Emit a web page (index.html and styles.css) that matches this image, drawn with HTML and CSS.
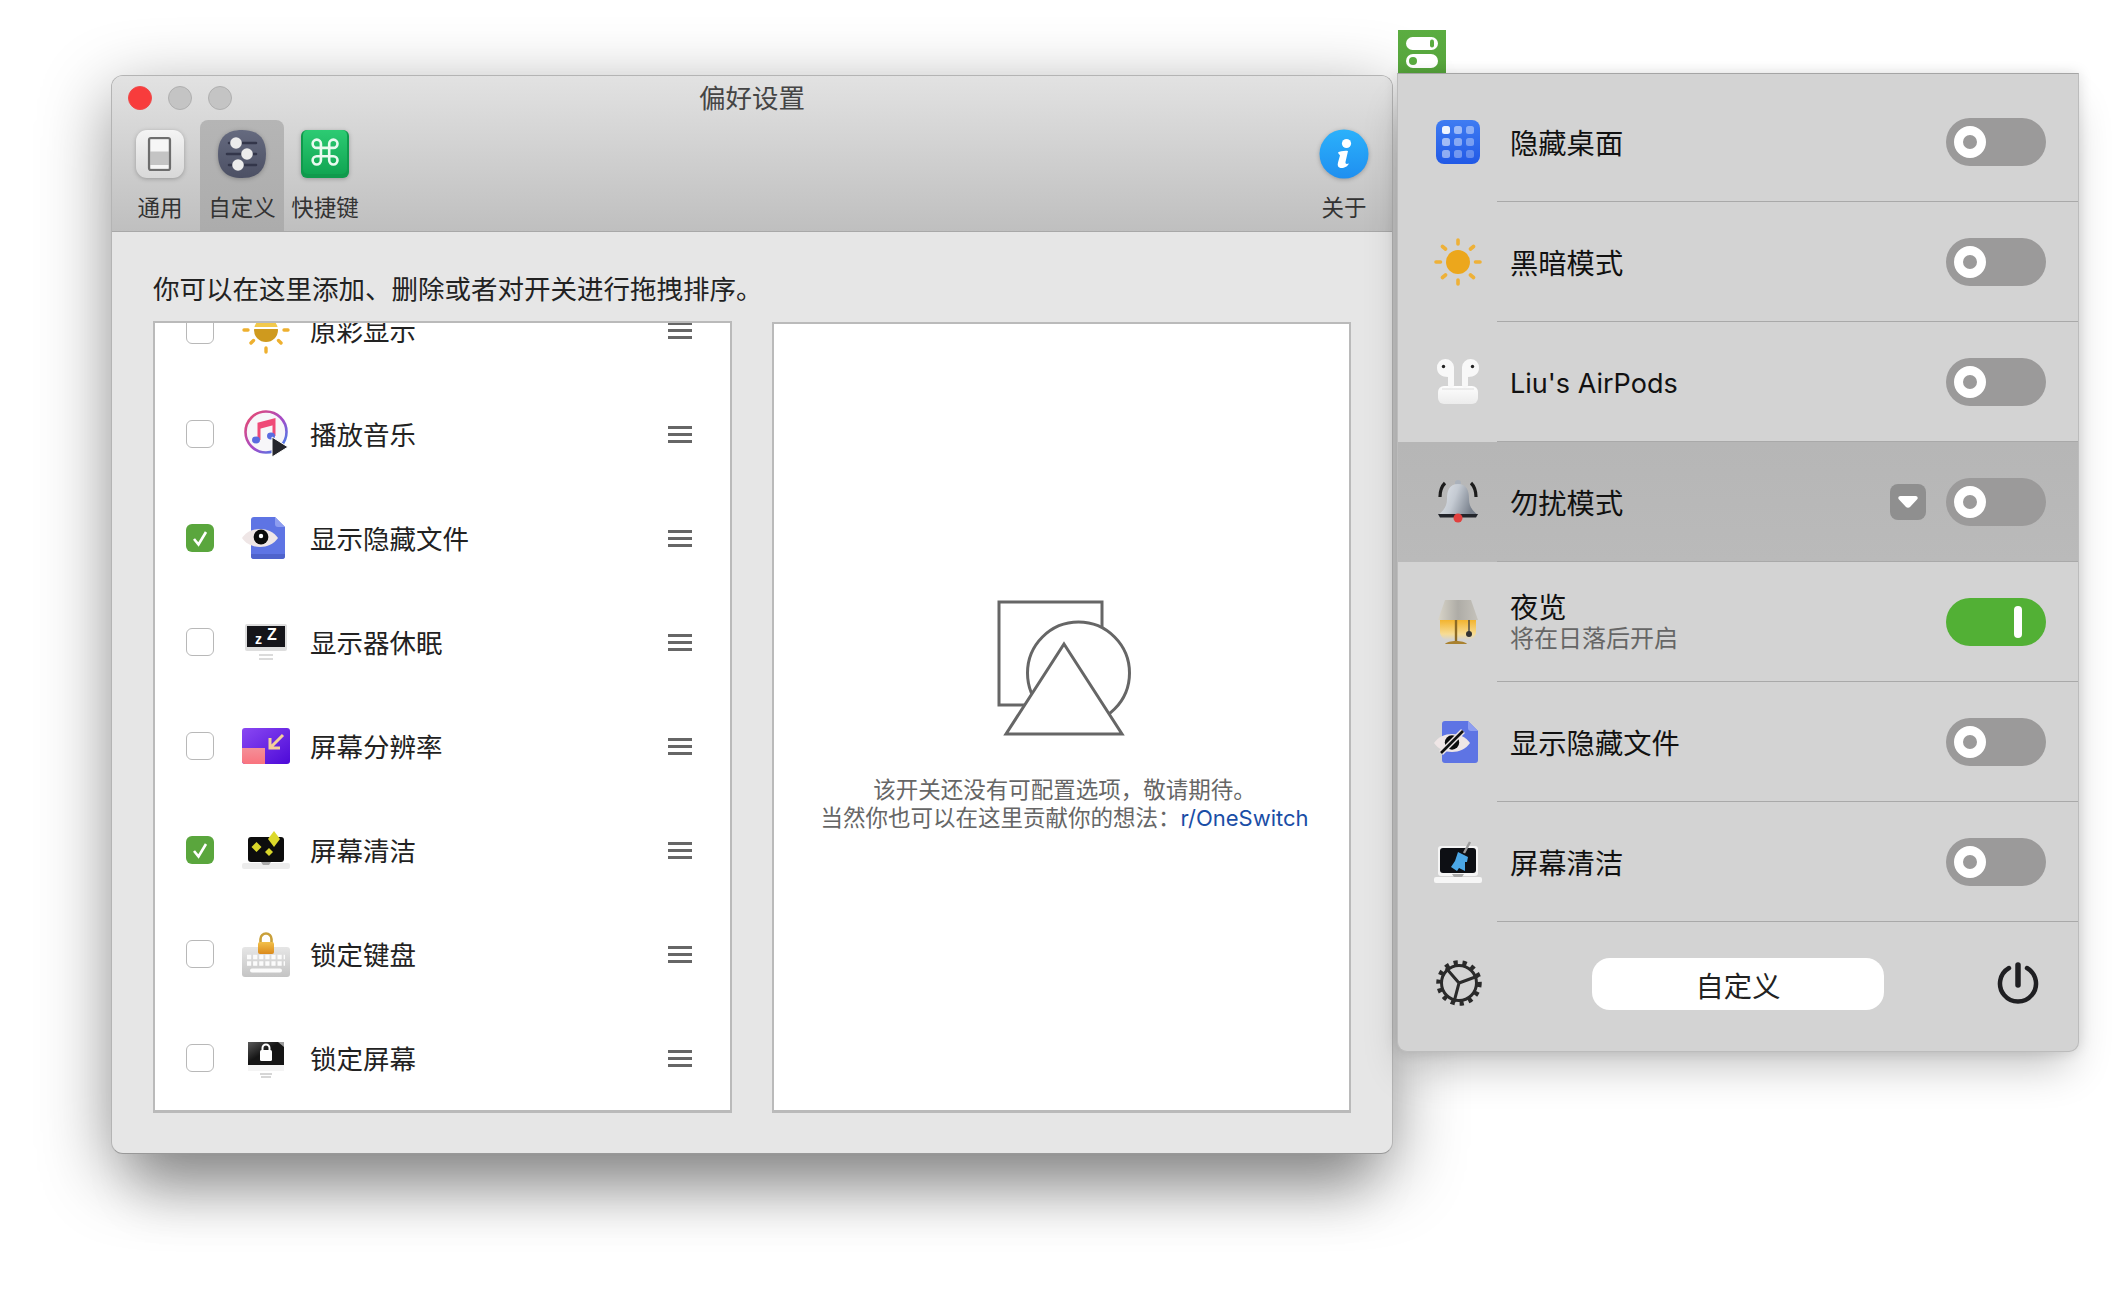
FILE: index.html
```html
<!DOCTYPE html>
<html lang="zh-CN">
<head>
<meta charset="utf-8">
<title>偏好设置</title>
<link rel="stylesheet" href="styles.css">
</head>
<body>
<section class="window">
  <header class="toolbar">
    <div class="titlebar">
      <div class="lights"><span class="light light-red"></span><span class="light"></span><span class="light"></span></div>
      <div class="title">偏好设置</div>
    </div>
    <nav class="tabs">
      <div class="tab tab-general">
        <svg class="tab-icon" viewBox="0 0 50 50"><defs><linearGradient id="g1" x1="0" y1="0" x2="0" y2="1"><stop offset="0" stop-color="#f4f4f4"/><stop offset="1" stop-color="#d8d8d8"/></linearGradient></defs><rect x="1" y="1" width="48" height="48" rx="11" fill="url(#g1)"/><rect x="14" y="9" width="21" height="32" rx="2" fill="#c4c4c4" stroke="#6d6d6d" stroke-width="2.2"/><rect x="15.500" y="10.500" width="18" height="12" fill="#f6f6f6"/><rect x="15.500" y="36" width="18" height="3.600" fill="#f6f6f6"/></svg>
        <span class="tab-label">通用</span>
      </div>
      <div class="tab tab-custom tab-active">
        <svg class="tab-icon" viewBox="0 0 50 50"><defs><linearGradient id="g2" x1="0" y1="0" x2="0" y2="1"><stop offset="0" stop-color="#656a7f"/><stop offset="1" stop-color="#4c5064"/></linearGradient></defs><path d="M25 1C41 1 49 9 49 25S41 49 25 49 1 41 1 25 9 1 25 1Z" fill="url(#g2)"/><g stroke="#33364a" stroke-width="2.6" stroke-linecap="round"><path d="M12 14H39M10 25H39M12 36H39"/></g><circle cx="19" cy="14" r="5.800" fill="#ececec"/><circle cx="30" cy="25" r="5.800" fill="#ececec"/><circle cx="21" cy="36" r="5.800" fill="#ececec"/></svg>
        <span class="tab-label">自定义</span>
      </div>
      <div class="tab tab-keys">
        <svg class="tab-icon" viewBox="0 0 50 50"><defs><linearGradient id="g3" x1="0" y1="0" x2="0" y2="1"><stop offset="0" stop-color="#2dcb73"/><stop offset="1" stop-color="#10a552"/></linearGradient></defs><rect x="1" y="1" width="48" height="48" rx="6" fill="#0f9a4c"/><rect x="3" y="1" width="44" height="44" rx="5" fill="url(#g3)"/><g transform="translate(8.500 6.500) scale(1.380)"><path d="M15 6v12a3 3 0 1 0 3-3H6a3 3 0 1 0 3 3V6a3 3 0 1 0-3 3h12a3 3 0 1 0-3-3" fill="none" stroke="#eafaf0" stroke-width="1.900"/></g></svg>
        <span class="tab-label">快捷键</span>
      </div>
      <div class="tab tab-about">
        <svg class="tab-icon" viewBox="0 0 50 50"><defs><linearGradient id="g4" x1="0" y1="0" x2="0" y2="1"><stop offset="0" stop-color="#2bb1fb"/><stop offset="1" stop-color="#1f8ff0"/></linearGradient></defs><circle cx="25" cy="25" r="24.500" fill="url(#g4)"/><circle cx="27.500" cy="14.500" r="4.600" fill="#fff"/><path d="M19 23.500C21 22.500 25 21.500 29 22L26.500 33C26.300 35 27.500 35.500 29.800 34.500 29 37.500 24.500 39.500 21.500 39 19 38.500 18.200 36.500 19 33.500L21 26.500C20.500 25.500 19.500 25 19 23.500Z" fill="#fff"/></svg>
        <span class="tab-label">关于</span>
      </div>
    </nav>
  </header>
  <main class="content">
    <p class="intro">你可以在这里添加、删除或者对开关进行拖拽排序。</p>
    <div class="panels">
      <ul class="list">
        <li class="row">
          <span class="check"></span>
          <svg class="row-icon" viewBox="0 0 48 48"><defs><clipPath id="c1"><circle cx="24" cy="24" r="12"/></clipPath></defs><g clip-path="url(#c1)"><rect x="10" y="10" width="28" height="5" fill="#b99bd8"/><rect x="10" y="15" width="28" height="2" fill="#fff"/><rect x="10" y="17" width="28" height="4" fill="#f2c94c"/><rect x="10" y="21" width="28" height="2" fill="#fff"/><rect x="10" y="23" width="28" height="14" fill="#cf9a1e"/></g><g stroke="#eeb02f" stroke-width="3.400" stroke-linecap="round"><path d="M2 24H6M42 24H46M24 42V46M9 37L11.500 34.500M39 37L36.500 34.500"/></g></svg>
          <span class="row-label">原彩显示</span>
          <span class="grip"><i></i><i></i><i></i></span>
        </li>
        <li class="row">
          <span class="check"></span>
          <svg class="row-icon" viewBox="0 0 48 48"><defs><linearGradient id="m1" x1="0" y1="0" x2="1" y2="1"><stop offset="0" stop-color="#ef4a68"/><stop offset=".55" stop-color="#a34bc9"/><stop offset="1" stop-color="#2f8df0"/></linearGradient></defs><circle cx="24" cy="22" r="20.500" fill="#f7f6f9" stroke="url(#m1)" stroke-width="2.600"/><path d="M17 30V14L32 10V26" fill="none" stroke="#ef4a78" stroke-width="3"/><path d="M17 14L32 10V15L17 19Z" fill="#ef4a78"/><ellipse cx="14" cy="30" rx="4" ry="3.400" fill="#5a6be0"/><ellipse cx="29" cy="26" rx="4" ry="3.400" fill="#5a6be0"/><path d="M30 27L46 37 30 47Z" fill="#26262c" stroke="#fff" stroke-width="1"/></svg>
          <span class="row-label">播放音乐</span>
          <span class="grip"><i></i><i></i><i></i></span>
        </li>
        <li class="row">
          <span class="check check-on"><svg viewBox="0 0 28 28"><path d="M8 15L12.500 20.500 20 8" fill="none" stroke="#fff" stroke-width="2.600"/></svg></span>
          <svg class="row-icon" viewBox="0 0 48 48"><path d="M12 3H33L43 13V42A3 3 0 0 1 40 45H12A3 3 0 0 1 9 42V6A3 3 0 0 1 12 3Z" fill="#5e74e4"/><path d="M33 3L43 13H36A3 3 0 0 1 33 10Z" fill="#8d9df0"/><path d="M9 40H43V42A3 3 0 0 1 40 45H12A3 3 0 0 1 9 42Z" fill="#4f63cc"/><path d="M0 24C8 12 28 12 36 24 28 36 8 36 0 24Z" fill="#efe6e6"/><circle cx="19" cy="23" r="7.400" fill="#0b0b0b"/><circle cx="19" cy="22" r="2.200" fill="#fff"/></svg>
          <span class="row-label">显示隐藏文件</span>
          <span class="grip"><i></i><i></i><i></i></span>
        </li>
        <li class="row">
          <span class="check"></span>
          <svg class="row-icon" viewBox="0 0 48 48"><rect x="3" y="6" width="42" height="27" rx="2" fill="#dedede"/><rect x="5" y="8" width="38" height="21" fill="#15151a"/><text class="zz-small" x="13" y="26">z</text><text class="zz-big" x="25" y="22">Z</text><path d="M17 37H31M17 41H31" stroke="#cfcfcf" stroke-width="1.600"/></svg>
          <span class="row-label">显示器休眠</span>
          <span class="grip"><i></i><i></i><i></i></span>
        </li>
        <li class="row">
          <span class="check"></span>
          <svg class="row-icon" viewBox="0 0 48 48"><defs><linearGradient id="r1" x1="0" y1="0" x2="1" y2="1"><stop offset="0" stop-color="#8a48f2"/><stop offset="1" stop-color="#4d0ad8"/></linearGradient><linearGradient id="r2" x1="0" y1="0" x2="0" y2="1"><stop offset="0" stop-color="#f48f98"/><stop offset="1" stop-color="#f9737e"/></linearGradient></defs><rect y="6" width="48" height="36" rx="3" fill="url(#r1)"/><path d="M0 26H23V42H3A3 3 0 0 1 0 39Z" fill="url(#r2)"/><path d="M41 13L28 26M28 16V26H38" fill="none" stroke="#f4cf9a" stroke-width="3"/></svg>
          <span class="row-label">屏幕分辨率</span>
          <span class="grip"><i></i><i></i><i></i></span>
        </li>
        <li class="row">
          <span class="check check-on"><svg viewBox="0 0 28 28"><path d="M8 15L12.500 20.500 20 8" fill="none" stroke="#fff" stroke-width="2.600"/></svg></span>
          <svg class="row-icon" viewBox="0 0 48 48"><rect y="37" width="48" height="6" rx="2" fill="#ececec"/><rect x="6" y="11" width="36" height="25" rx="3" fill="#0d0d0d"/><path d="M19 36H29L27 39H21Z" fill="#a9a9a9"/><path d="M32 5L38 13 32 21 26 13Z" fill="#dcd92a"/><path d="M14.500 16L19.500 21 14.500 26 9.500 21Z" fill="#d9d62a"/><path d="M27 22L31 26 27 30 23 26Z" fill="#d9d62a"/></svg>
          <span class="row-label">屏幕清洁</span>
          <span class="grip"><i></i><i></i><i></i></span>
        </li>
        <li class="row">
          <span class="check"></span>
          <svg class="row-icon" viewBox="0 0 48 48"><defs><linearGradient id="k1" x1="0" y1="0" x2="0" y2="1"><stop offset="0" stop-color="#e6e6e6"/><stop offset="1" stop-color="#c4c4c4"/></linearGradient><linearGradient id="k2" x1="0" y1="0" x2="0" y2="1"><stop offset="0" stop-color="#f2c04a"/><stop offset="1" stop-color="#db8a1c"/></linearGradient></defs><rect y="17" width="48" height="30" rx="3" fill="url(#k1)"/><g stroke="#fbfbfb" stroke-width="4.500" stroke-dasharray="4.200 1.900"><path d="M5 27H43M5 33.500H43"/></g><path d="M10 40.500H38" stroke="#fbfbfb" stroke-width="4" stroke-linecap="round"/><path d="M18.500 13V9A5.500 5.500 0 0 1 29.500 9V13" fill="none" stroke="#c9a03a" stroke-width="2.600"/><rect x="16" y="12" width="16" height="12" rx="2" fill="url(#k2)"/></svg>
          <span class="row-label">锁定键盘</span>
          <span class="grip"><i></i><i></i><i></i></span>
        </li>
        <li class="row">
          <span class="check"></span>
          <svg class="row-icon" viewBox="0 0 48 48"><defs><linearGradient id="l1" x1="0" y1="0" x2="1" y2="1"><stop offset="0" stop-color="#5a5a5a"/><stop offset=".45" stop-color="#151515"/></linearGradient></defs><rect x="6" y="8" width="36" height="23" fill="url(#l1)"/><path d="M36 8H42V13Z" fill="#9a9a9a"/><rect x="6" y="31" width="36" height="6" fill="#f4f4f4"/><path d="M18 40H30M19 43H29" stroke="#c9c9c9" stroke-width="1.400"/><rect x="18" y="16" width="12" height="11" rx="1.500" fill="#fff"/><path d="M20.500 16V14A3.500 3.500 0 0 1 27.500 14V16" fill="none" stroke="#fff" stroke-width="2"/></svg>
          <span class="row-label">锁定屏幕</span>
          <span class="grip"><i></i><i></i><i></i></span>
        </li>
      </ul>
      <div class="detail">
        <svg class="shapes" viewBox="0 0 136 138"><rect x="3" y="3" width="103" height="103" fill="none" stroke="#666" stroke-width="3"/><circle cx="82.500" cy="74" r="51" fill="#fff" stroke="#666" stroke-width="3"/><path d="M68 45L126 135H10Z" fill="#fff" stroke="#666" stroke-width="3"/></svg>
        <p class="detail-text">该开关还没有可配置选项&#xFF0C;敬请期待。<br>当然你也可以在这里贡献你的想法&#xFF1A;<a class="detail-link">r/OneSwitch</a></p>
      </div>
    </div>
  </main>
</section>

<div class="menubar-item">
  <svg viewBox="0 0 48 43"><rect x="8" y="7" width="32" height="13" rx="6.500" fill="#fff"/><rect x="8" y="24" width="32" height="14" rx="7" fill="#fff"/><rect x="32" y="9.500" width="4" height="8" rx="2" fill="#59ab3f"/><circle cx="15" cy="31" r="4" fill="#59ab3f"/></svg>
</div>

<aside class="popover">
  <div class="pop-row">
    <svg class="pop-icon" viewBox="0 0 48 48"><defs><linearGradient id="p1" x1="0" y1="0" x2="0" y2="1"><stop offset="0" stop-color="#3f7cf2"/><stop offset="1" stop-color="#2159e6"/></linearGradient></defs><rect x="2" y="2" width="44" height="44" rx="8" fill="url(#p1)"/><g fill="#fff"><rect x="8" y="8" width="8" height="8" rx="2.500" opacity=".92"/><rect x="20" y="8" width="8" height="8" rx="2.500" opacity=".5"/><rect x="32" y="8" width="8" height="8" rx="2.500" opacity=".42"/><rect x="8" y="20" width="8" height="8" rx="2.500" opacity=".55"/><rect x="20" y="20" width="8" height="8" rx="2.500" opacity=".42"/><rect x="32" y="20" width="8" height="8" rx="2.500" opacity=".35"/><rect x="8" y="32" width="8" height="8" rx="2.500" opacity=".48"/><rect x="20" y="32" width="8" height="8" rx="2.500" opacity=".35"/><rect x="32" y="32" width="8" height="8" rx="2.500" opacity=".28"/></g></svg>
    <div class="pop-text"><span class="pop-title">隐藏桌面</span></div>
    <span class="toggle"><span class="knob"></span></span>
  </div>
  <div class="pop-row">
    <svg class="pop-icon" viewBox="0 0 48 48"><circle cx="24" cy="24" r="12" fill="#eca71c"/><g stroke="#eeb138" stroke-width="3.600" stroke-linecap="round"><path d="M24 2V6M24 42V46M2 24H6.500M41.500 24H46M8.500 8.500L11.500 11M39.500 8.500L36.500 11M8.500 39.500L11.500 37M39.500 39.500L36.500 37"/></g></svg>
    <div class="pop-text"><span class="pop-title">黑暗模式</span></div>
    <span class="toggle"><span class="knob"></span></span>
  </div>
  <div class="pop-row">
    <svg class="pop-icon" viewBox="0 0 48 48"><defs><linearGradient id="p2" x1="0" y1="0" x2="0" y2="1"><stop offset="0" stop-color="#fdfdfd"/><stop offset="1" stop-color="#ececec"/></linearGradient></defs><rect x="4" y="28" width="40" height="18" rx="6" fill="url(#p2)"/><path d="M8 31H40" stroke="#dcdcdc" stroke-width="1"/><path d="M3 10A8.500 8.500 0 0 1 20 9V27C20 31 14 31 14 27V19C8 19 3 16 3 10Z" fill="#f8f8f8"/><path d="M45 10A8.500 8.500 0 0 0 28 9V27C28 31 34 31 34 27V19C40 19 45 16 45 10Z" fill="#f8f8f8"/><circle cx="9.500" cy="8.500" r="1.700" fill="#222"/><circle cx="38.500" cy="8.500" r="1.700" fill="#222"/></svg>
    <div class="pop-text"><span class="pop-title pop-title-latin">Liu's AirPods</span></div>
    <span class="toggle"><span class="knob"></span></span>
  </div>
  <div class="pop-row pop-row-active">
    <svg class="pop-icon" viewBox="0 0 48 48"><defs><linearGradient id="p3" x1="0" y1="0" x2="1" y2=".3"><stop offset="0" stop-color="#e4e8ed"/><stop offset=".5" stop-color="#c4cad2"/><stop offset="1" stop-color="#767e8a"/></linearGradient></defs><path d="M6 19C6 12 8 8 11 5M42 19C42 12 40 8 37 5" fill="none" stroke="#1c1c1c" stroke-width="3.200"/><circle cx="24" cy="5" r="3" fill="#aab1bb"/><path d="M24 6C33 6 35 13 35 21 35 29 39 33 44 37H4C9 33 13 29 13 21 13 13 15 6 24 6Z" fill="url(#p3)"/><path d="M4 36H44L42 39.500H6Z" fill="#23252b"/><circle cx="24" cy="40" r="4.500" fill="#e2403e"/></svg>
    <div class="pop-text"><span class="pop-title">勿扰模式</span></div>
    <span class="dropdown"><svg viewBox="0 0 20 12"><path d="M2.500 0H17.500C19.500 0 20.500 2 19 3.500L12 11C11 12 9 12 8 11L1 3.500C-.5 2 .5 0 2.500 0Z" fill="#fff"/></svg></span>
    <span class="toggle"><span class="knob"></span></span>
  </div>
  <div class="pop-row">
    <svg class="pop-icon" viewBox="0 0 48 48"><defs><linearGradient id="p4" x1="0" y1="0" x2="1" y2="0"><stop offset="0" stop-color="#d8d4c8"/><stop offset=".5" stop-color="#aeaca6"/><stop offset="1" stop-color="#c5c2bb"/></linearGradient><linearGradient id="p5" x1="0" y1="0" x2="0" y2="1"><stop offset="0" stop-color="#f3b42f"/><stop offset=".7" stop-color="#f7dc94"/><stop offset="1" stop-color="#f7dc94" stop-opacity="0"/></linearGradient></defs><path d="M6 22H42V34C42 38 38 42 36 42H12C10 42 6 38 6 34Z" fill="url(#p5)"/><path d="M11 2H37L44 22H4Z" fill="url(#p4)"/><path d="M22 22V43" stroke="#8d6a24" stroke-width="2.400"/><path d="M35 22V34" stroke="#444" stroke-width="1.400"/><circle cx="35" cy="36" r="3" fill="#333"/><path d="M11 46C14 42 30 42 33 46Z" fill="#a9812f"/></svg>
    <div class="pop-text pop-text-stack"><span class="pop-title">夜览</span><span class="pop-sub">将在日落后开启</span></div>
    <span class="toggle toggle-on"><span class="bar"></span></span>
  </div>
  <div class="pop-row">
    <svg class="pop-icon" viewBox="0 0 48 48"><path d="M11 3H34L44 13V42A3 3 0 0 1 41 45H11A3 3 0 0 1 8 42V6A3 3 0 0 1 11 3Z" fill="#5e74e4"/><path d="M34 3L44 13H37A3 3 0 0 1 34 10Z" fill="#8d9df0"/><path d="M0 25C8 13 28 13 36 25 28 37 8 37 0 25Z" fill="#efe6e6"/><circle cx="18" cy="24.500" r="7.200" fill="#0b0b0b"/><path d="M7 35L29 13" stroke="#efe6e6" stroke-width="5.500"/><path d="M7 35L29 13" stroke="#111" stroke-width="2.600"/></svg>
    <div class="pop-text"><span class="pop-title">显示隐藏文件</span></div>
    <span class="toggle"><span class="knob"></span></span>
  </div>
  <div class="pop-row">
    <svg class="pop-icon" viewBox="0 0 48 48"><rect x="4" y="8" width="40" height="30" rx="3" fill="#f5f5f5"/><rect x="6" y="10" width="36" height="25" rx="3" fill="#0d0f14"/><rect y="39" width="48" height="6" rx="2" fill="#f6f6f6"/><path d="M18 36H30L28 39H20Z" fill="#a9a9a9"/><path d="M36 4L30 15" stroke="#9a9a9a" stroke-width="2.400"/><path d="M24 14L34 19 33 24H31V33L25 30 23 33 17 29 21 23Z" fill="#4ba7e6"/></svg>
    <div class="pop-text"><span class="pop-title">屏幕清洁</span></div>
    <span class="toggle"><span class="knob"></span></span>
  </div>
  <footer class="pop-footer">
    <svg class="gear" viewBox="0 0 48 48"><circle cx="24" cy="24" r="17.500" fill="none" stroke="#2a2a2a" stroke-width="3"/><circle cx="24" cy="24" r="20.500" fill="none" stroke="#2a2a2a" stroke-width="4.500" stroke-dasharray="4.200 4.850"/><path d="M24 24L11 9M24 24L43 17M24 24L19 43" stroke="#2a2a2a" stroke-width="3"/></svg>
    <button class="custom-btn">自定义</button>
    <svg class="power" viewBox="0 0 48 48"><path d="M15 9A18 18 0 1 0 33 9" fill="none" stroke="#1f1f22" stroke-width="4.500" stroke-linecap="round"/><path d="M24 6V26" stroke="#1f1f22" stroke-width="5.500" stroke-linecap="round"/></svg>
  </footer>
</aside>
</body>
</html>
```
FILE: styles.css
```css
* { box-sizing: border-box; }
html, body { margin: 0; padding: 0; }
body {
  position: relative;
  width: 2124px;
  height: 1300px;
  overflow: hidden;
  background: #fff;
  font-family: Inter, "Noto Sans CJK SC", sans-serif;
  color: #222;
}
p, ul { margin: 0; padding: 0; }
li { list-style: none; }

/* desktop windows */
.window {
  position: absolute;
  left: 111px;
  top: 75px;
  width: 1282px;
  height: 1079px;
  display: flex;
  flex-direction: column;
  background: #e6e6e6;
  border: 1px solid #b4b4b4;
  border-bottom-color: #989898;
  border-radius: 12px;
  overflow: hidden;
  box-shadow: 0 20px 70px rgba(0, 0, 0, .42), 0 70px 50px -30px rgba(0, 0, 0, .18);
}
.menubar-item {
  position: absolute;
  left: 1398px;
  top: 30px;
  width: 48px;
  height: 44px;
  background: linear-gradient(#5bad41, #55a33b);
}
.menubar-item svg { display: block; width: 48px; height: 43px; }
.popover {
  position: absolute;
  left: 1397px;
  top: 73px;
  width: 682px;
  height: 979px;
  padding: 8px 0;
  display: flex;
  flex-direction: column;
  background: #d3d3d3;
  border: 1px solid #bcbcbc;
  border-top-color: #a5a5a5;
  border-radius: 0 0 10px 10px;
  box-shadow: 0 24px 40px -10px rgba(0, 0, 0, .24), 0 0 14px rgba(0, 0, 0, .13);
}

/* toolbar */
.toolbar {
  flex: none;
  height: 156px;
  display: flex;
  flex-direction: column;
  background: linear-gradient(#e2e2e2, #bfbfbf);
  border-bottom: 1px solid #a8a8a8;
}
.titlebar {
  position: relative;
  height: 44px;
  display: flex;
  align-items: center;
  justify-content: center;
}
.lights {
  position: absolute;
  left: 16px;
  top: 10px;
  display: flex;
  gap: 16px;
}
.light {
  width: 24px;
  height: 24px;
  border-radius: 50%;
  background: #c4c4c4;
  border: 1px solid #afafaf;
}
.light-red { background: #f83c3c; border-color: #ee4a4a; }
.title {
  font-size: 26.500px;
  line-height: 46px;
  color: #454545;
}
.tabs { flex: 1; display: flex; padding: 0 8px; }
.tab {
  display: flex;
  flex-direction: column;
  align-items: center;
  padding-top: 9px;
  border-radius: 8px 8px 0 0;
}
.tab-general { width: 80px; }
.tab-custom { width: 84px; }
.tab-keys { width: 82px; }
.tab-about { width: 80px; margin-left: auto; }
.tab-active { background: linear-gradient(#b5b5b5, #acacac); }
.tab-icon { display: block; width: 50px; height: 50px; filter: drop-shadow(0 1px 2px rgba(0, 0, 0, .25)); }
.tab-label { font-size: 22.500px; line-height: 30px; margin-top: 14px; color: #333; white-space: nowrap; }

/* content */
.content {
  flex: 1;
  min-height: 0;
  display: flex;
  flex-direction: column;
  padding: 42px 41px 40px;
}
.intro { font-size: 26.500px; line-height: 30px; color: #222; }
.panels {
  flex: 1;
  min-height: 0;
  margin-top: 17px;
  display: grid;
  grid-template-columns: 1fr 1fr;
  gap: 40px;
}
.list, .detail {
  background: #fff;
  border: 2px solid #bababa;
  border-bottom-width: 3px;
  min-height: 0;
  overflow: hidden;
}
.list {
  display: flex;
  flex-direction: column;
  justify-content: flex-end;
}
.row {
  flex: none;
  height: 104px;
  display: flex;
  align-items: center;
  padding: 0 38px 0 31px;
}
.check {
  flex: none;
  width: 28px;
  height: 28px;
  background: #fff;
  border: 1.500px solid #b8b8b8;
  border-radius: 6px;
}
.check-on { background: #5aa63d; border: 0; }
.check-on svg { display: block; width: 28px; height: 28px; }
.row-icon { flex: none; width: 48px; height: 48px; margin-left: 28px; }
.row-label { flex: 1; margin-left: 20px; padding-top: 2px; font-size: 26.500px; line-height: 34px; color: #222; }
.zz-small, .zz-big { font-family: "Liberation Sans", sans-serif; font-weight: 700; fill: #fff; }
.zz-small { font-size: 14px; }
.zz-big { font-size: 16px; }
.grip { flex: none; width: 24px; display: flex; flex-direction: column; gap: 4px; }
.grip i { display: block; height: 3px; background: #666; }

.detail {
  display: flex;
  flex-direction: column;
  align-items: center;
  margin-top: 1px;
  padding-top: 275px;
}
.shapes { display: block; width: 136px; height: 138px; margin-left: 5px; }
.detail-text {
  margin: 39px 0 0 6px;
  font-size: 22.500px;
  line-height: 28px;
  text-align: center;
  color: #666;
  white-space: nowrap;
}
.detail-link { font-size: 22px; color: #1a4ea6; }

/* popover rows */
.pop-row {
  position: relative;
  flex: none;
  height: 120px;
  display: flex;
  align-items: center;
  padding: 0 32px 0 36px;
}
.pop-row::after {
  content: "";
  position: absolute;
  left: 99px;
  right: 0;
  bottom: 0;
  height: 1px;
  background: #a9a9a9;
}
.pop-row-active { background: linear-gradient(#b6b6b6, #bababa); }
.pop-icon { flex: none; width: 48px; height: 48px; }
.pop-text { flex: 1; margin-left: 28px; padding-top: 3px; display: flex; flex-direction: column; }
.pop-title { font-size: 28.300px; line-height: 36px; color: #111; }
.pop-title-latin { font-size: 27px; }
.pop-sub { font-size: 24px; line-height: 30px; margin-top: -2px; color: #666; }
.pop-text-stack { padding-top: 0; }
.toggle {
  flex: none;
  width: 100px;
  height: 48px;
  display: flex;
  align-items: center;
  padding: 0 8px;
  background: #9b9a9a;
  border-radius: 24px;
}
.toggle-on { background: #52b035; justify-content: flex-end; padding-right: 24px; }
.knob {
  width: 32px;
  height: 32px;
  border: 9px solid #fff;
  border-radius: 50%;
}
.bar { width: 8px; height: 32px; background: #fff; border-radius: 4px; }
.dropdown {
  flex: none;
  width: 36px;
  height: 36px;
  margin-right: 20px;
  display: flex;
  align-items: center;
  justify-content: center;
  background: #8f8f8f;
  border-radius: 8px;
}
.dropdown svg { display: block; width: 20px; height: 12px; }

/* popover footer */
.pop-footer {
  flex: 1;
  display: flex;
  align-items: center;
  padding: 1px 36px 0 37px;
}
.gear { flex: none; width: 48px; height: 48px; }
.custom-btn {
  flex: none;
  width: 292px;
  height: 52px;
  margin: 2px 0 0 109px;
  padding: 0;
  border: 0;
  border-radius: 18px;
  background: #fff;
  font-family: inherit;
  font-size: 28.300px;
  color: #222;
}
.power { flex: none; width: 48px; height: 48px; margin-left: auto; }
```
